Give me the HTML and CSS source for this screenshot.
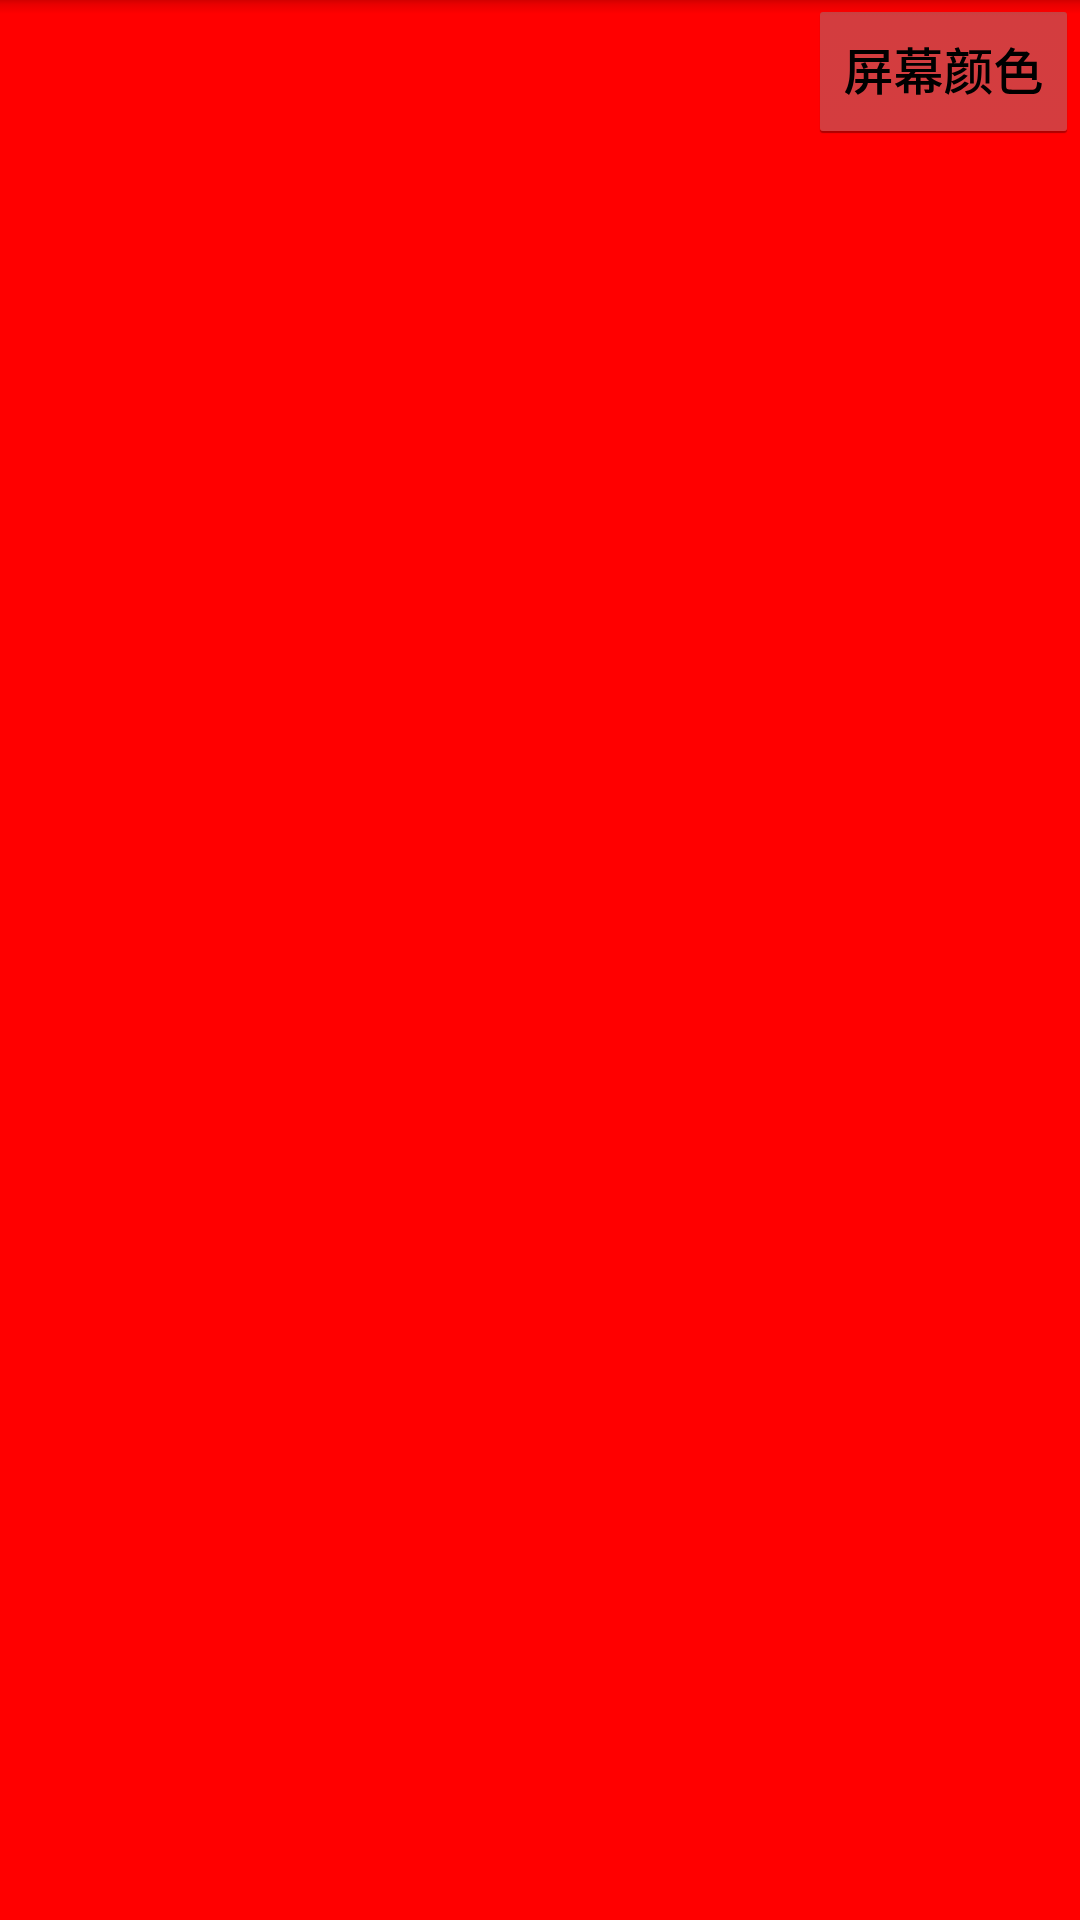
FILE: index.html
```html
<!DOCTYPE html>
<html lang="zh">
<head>
<meta charset="utf-8">
<link rel="stylesheet" href="styles.css">
</head>
<body>
<div class="screen">
  <div class="topshade"></div>
  <div class="bar">
    <button class="btn">屏幕颜色</button>
  </div>
</div>
</body>
</html>
```
FILE: styles.css
```css
html, body {
  margin: 0;
  padding: 0;
  width: 1080px;
  height: 1920px;
  background: #ff0000;
  overflow: hidden;
}
.screen {
  position: relative;
  width: 1080px;
  height: 1920px;
  background: #ff0000;
}
.topshade {
  position: absolute;
  left: 0;
  top: 0;
  width: 100%;
  height: 14px;
  background: linear-gradient(to bottom, #d20000 0%, #e80000 30%, #ff0000 100%);
}
.bar {
  display: flex;
  justify-content: flex-end;
  padding: 12px 13px 0 0;
  position: relative;
}
.btn {
  width: 247px;
  height: 119px;
  margin: 0;
  padding: 0 0 8px 0;
  border: none;
  border-radius: 3px;
  background: linear-gradient(to bottom, #c84040 0px, #d33d3f 4px, #d43d3f 100%);
  box-shadow: 0 2px 1px rgba(120, 0, 0, 0.6);
  color: #000;
  font-family: "Noto Sans CJK SC", sans-serif;
  font-size: 50px;
  font-weight: 500;
  line-height: 1;
  display: flex;
  align-items: center;
  justify-content: center;
}
```
